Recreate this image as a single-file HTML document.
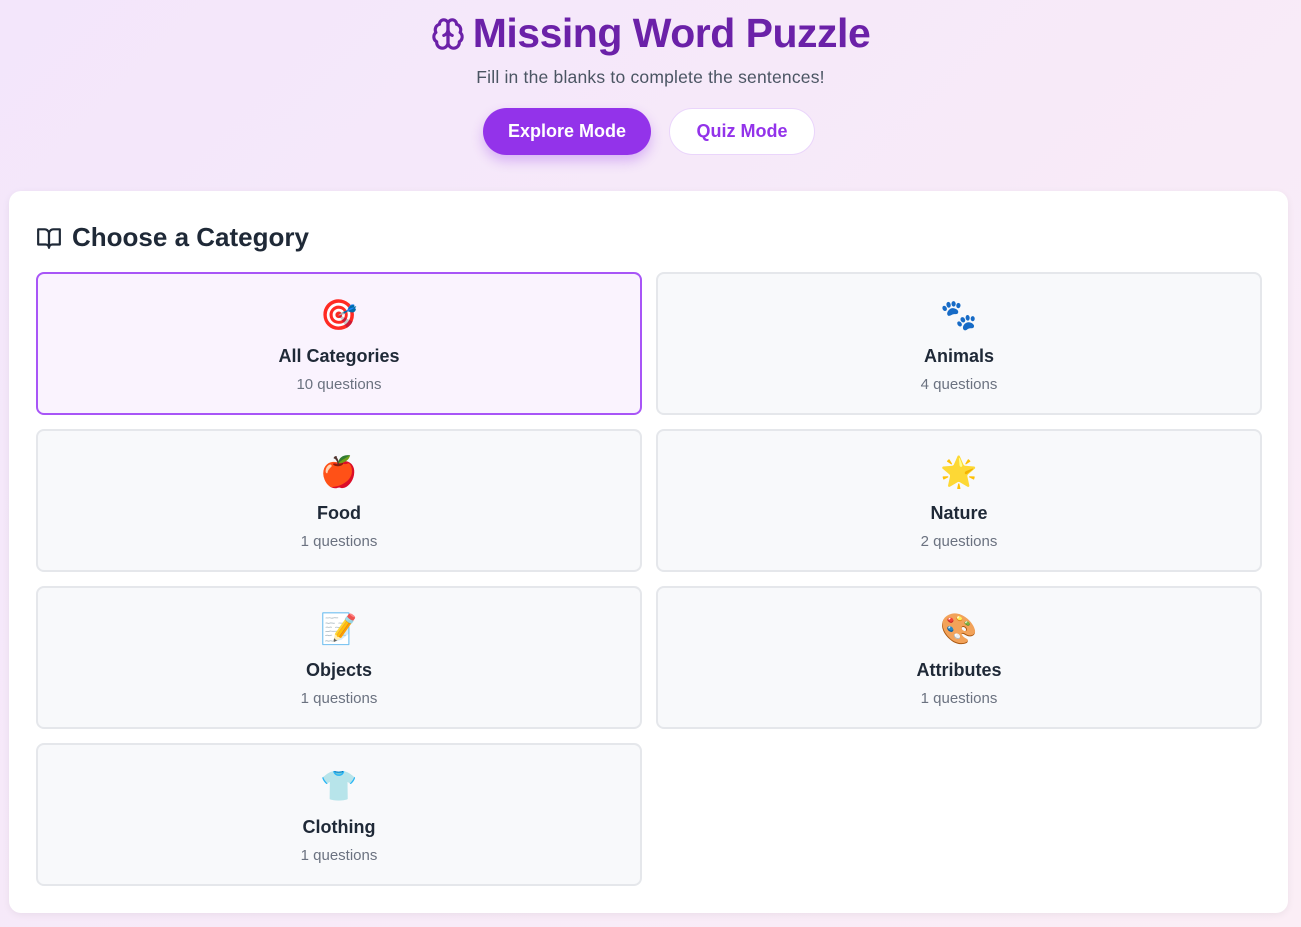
<!DOCTYPE html>
<html><head><meta charset="utf-8"><style>
*{box-sizing:border-box;margin:0;padding:0}
body{width:1301px;height:927px;overflow:hidden;font-family:"Liberation Sans","DejaVu Sans",sans-serif;background:linear-gradient(135deg,#f3e6fb,#fbeef6);position:relative}
h1{position:absolute;top:10px;left:0;width:1301px;text-align:center;font-size:41px;font-weight:bold;color:#6b21a8;letter-spacing:-0.5px}
h1 svg{vertical-align:-4px;margin-right:8px}
.sub{position:absolute;top:67px;width:1301px;text-align:center;font-size:17.5px;color:#4b5563;letter-spacing:0.2px}
.btn{position:absolute;top:108px;height:47px;border-radius:24px;font-size:18px;font-weight:bold;display:flex;align-items:center;justify-content:center}
.b1{left:483px;width:168px;background:#9333ea;color:#fff;box-shadow:0 6px 12px rgba(147,51,234,.3)}
.b2{left:669px;width:146px;background:#fff;color:#9333ea;border:1px solid #ead5fb}
.panel{position:absolute;left:9px;top:191px;width:1279px;height:722px;background:#fff;border-radius:12px;box-shadow:0 2px 8px rgba(0,0,0,.06)}
h2{position:absolute;left:36px;top:222px;font-size:26px;font-weight:bold;color:#1f2937;display:flex;align-items:center;gap:10px}
.card{position:absolute;width:606px;height:143px;background:#f8f9fb;border:2px solid #e5e7eb;border-radius:8px;text-align:center}
.card.sel{background:#faf3fe;border-color:#a855f7}
.e{position:absolute;top:22px;width:100%;font-size:30px;line-height:40px;font-family:"Noto Color Emoji","DejaVu Sans",sans-serif}
.n{position:absolute;top:72px;width:100%;font-size:18px;font-weight:bold;color:#1f2937}
.c{position:absolute;top:102px;width:100%;font-size:15px;color:#6b7280}
</style></head><body>
<h1><svg width="34" height="34" viewBox="0 0 24 24" fill="none" stroke="#6b21a8" stroke-width="2.2" stroke-linecap="round" stroke-linejoin="round"><path d="M12 5a3 3 0 1 0-5.997.125 4 4 0 0 0-2.526 5.77 4 4 0 0 0 .556 6.588A4 4 0 1 0 12 18Z"/><path d="M12 5a3 3 0 1 1 5.997.125 4 4 0 0 1 2.526 5.77 4 4 0 0 1-.556 6.588A4 4 0 1 1 12 18Z"/><path d="M12 5v13M9 13a4.5 4.5 0 0 0 3-4M15 13a4.5 4.5 0 0 1-3-4"/></svg>Missing Word Puzzle</h1>
<div class="sub">Fill in the blanks to complete the sentences!</div>
<div class="btn b1">Explore Mode</div>
<div class="btn b2">Quiz Mode</div>
<div class="panel"></div>
<h2><svg width="26" height="26" viewBox="0 0 24 24" fill="none" stroke="#1f2937" stroke-width="2" stroke-linejoin="round"><path d="M2 4h6a4 4 0 0 1 4 4v13a3 3 0 0 0-3-3H2z"/><path d="M22 4h-6a4 4 0 0 0-4 4v13a3 3 0 0 1 3-3h7z"/></svg>Choose a Category</h2>
<div class="card sel" style="left:36px;top:272px"><div class="e">🎯</div><div class="n">All Categories</div><div class="c">10 questions</div></div>
<div class="card" style="left:656px;top:272px"><div class="e">🐾</div><div class="n">Animals</div><div class="c">4 questions</div></div>
<div class="card" style="left:36px;top:429px"><div class="e">🍎</div><div class="n">Food</div><div class="c">1 questions</div></div>
<div class="card" style="left:656px;top:429px"><div class="e">🌟</div><div class="n">Nature</div><div class="c">2 questions</div></div>
<div class="card" style="left:36px;top:586px"><div class="e">📝</div><div class="n">Objects</div><div class="c">1 questions</div></div>
<div class="card" style="left:656px;top:586px"><div class="e">🎨</div><div class="n">Attributes</div><div class="c">1 questions</div></div>
<div class="card" style="left:36px;top:743px"><div class="e">👕</div><div class="n">Clothing</div><div class="c">1 questions</div></div>
</body></html>
